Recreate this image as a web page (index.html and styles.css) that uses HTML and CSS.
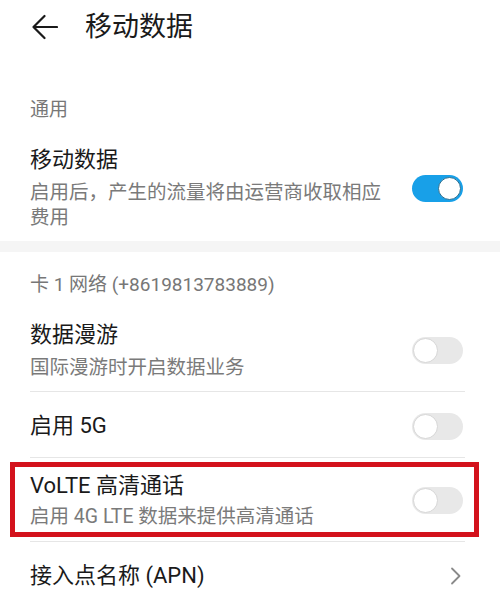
FILE: index.html
```html
<!DOCTYPE html>
<html lang="zh-CN">
<head>
<meta charset="utf-8">
<title>移动数据</title>
<link rel="stylesheet" href="styles.css">
</head>
<body>
<div class="page">
  <header class="header">
    <svg class="back" width="26" height="26" viewBox="0 0 26 26" aria-hidden="true">
      <path d="M1.5 13 H25 M12.5 2 L1.5 13 L12.5 24" fill="none" stroke="#1a1a1a" stroke-width="2.2" stroke-linecap="round" stroke-linejoin="round"/>
    </svg>
    <h1 class="title">移动数据</h1>
  </header>

  <div class="label label-first">通用</div>
  <div class="item item-1">
    <div class="text">
      <div class="item-title">移动数据</div>
      <div class="item-sub">启用后，产生的流量将由运营商收取相应费用</div>
    </div>
    <span class="toggle on"><span class="knob"></span></span>
  </div>

  <div class="band"></div>

  <div class="label label-second">卡 1 网络 (+8619813783889)</div>
  <div class="item item-2">
    <div class="text">
      <div class="item-title">数据漫游</div>
      <div class="item-sub">国际漫游时开启数据业务</div>
    </div>
    <span class="toggle"><span class="knob"></span></span>
  </div>
  <div class="divider"></div>
  <div class="item item-single">
    <div class="text">
      <div class="item-title">启用 5G</div>
    </div>
    <span class="toggle"><span class="knob"></span></span>
  </div>
  <div class="divider"></div>
  <div class="item item-volte">
    <div class="text">
      <div class="item-title">VoLTE 高清通话</div>
      <div class="item-sub">启用 4G LTE 数据来提供高清通话</div>
    </div>
    <span class="toggle"><span class="knob"></span></span>
    <div class="highlight"></div>
  </div>
  <div class="divider"></div>
  <div class="item item-apn">
    <div class="text">
      <div class="item-title">接入点名称 (APN)</div>
    </div>
    <svg class="chevron" width="12" height="18" viewBox="0 0 12 18" aria-hidden="true">
      <path d="M2 1.5 L9.5 9 L2 16.5" fill="none" stroke="#8a8a8a" stroke-width="1.8" stroke-linecap="round" stroke-linejoin="round"/>
    </svg>
  </div>
</div>
</body>
</html>
```

FILE: styles.css
```css
html, body {
  margin: 0;
  padding: 0;
  background: #ffffff;
}

body {
  font-family: "Roboto", "Noto Sans CJK SC", "Noto Sans", sans-serif;
  color: #1a1a1a;
}

.page {
  width: 500px;
  height: 596px;
  overflow: hidden;
}

.header {
  height: 54px;
  display: flex;
  align-items: center;
  padding-left: 32px;
}

.back {
  display: block;
  flex: none;
}

.title {
  margin: 0 0 0 27px;
  font-size: 27px;
  font-weight: 400;
  line-height: 34px;
  color: #1a1a1a;
}

.label {
  padding-left: 30px;
  font-size: 19px;
  line-height: 24px;
  color: #777777;
}

.label-first {
  margin-top: 44px;
}

.label-second {
  margin-top: 21px;
}

.item {
  position: relative;
  display: flex;
  align-items: center;
  padding: 0 37px 0 30px;
}

.text {
  flex: 1;
  min-width: 0;
}

.item-title {
  font-size: 22px;
  line-height: 28px;
  color: #1a1a1a;
}

.item-sub {
  margin-top: 6px;
  font-size: 19.5px;
  line-height: 25px;
  color: #7a7a7a;
}

.item-1 {
  padding-top: 24px;
  padding-bottom: 11px;
}

.item-1 .text {
  padding-right: 20px;
}

.item-2 {
  padding-top: 24px;
  padding-bottom: 11px;
}

.item-single {
  padding-top: 20px;
  padding-bottom: 17px;
}

.item-volte {
  padding-top: 14px;
  padding-bottom: 12px;
}

.item-volte .item-sub {
  margin-top: 4px;
}

.item-apn {
  padding-top: 20px;
  padding-bottom: 8px;
  padding-right: 38px;
}

.divider {
  height: 1px;
  margin: 0 35px 0 30px;
  background: #e6e6e6;
}

.band {
  height: 11px;
  background: #f5f5f5;
}

.toggle {
  position: relative;
  flex: none;
  width: 51px;
  height: 27px;
  border-radius: 14px;
  background: #e8e8e8;
  box-sizing: border-box;
}

.toggle .knob {
  position: absolute;
  top: 1px;
  left: 1px;
  width: 25px;
  height: 25px;
  border-radius: 50%;
  background: #ffffff;
  border: 1px solid #d6d6d6;
  box-sizing: border-box;
}

.toggle.on {
  background: #18a0e8;
}

.toggle.on .knob {
  left: auto;
  right: 2px;
  top: 2px;
  width: 23px;
  height: 23px;
  border: 1.5px solid #2f6f8f;
}

.highlight {
  position: absolute;
  left: 10px;
  top: 4px;
  width: 469px;
  height: 75px;
  border: 5px solid #d3121c;
  box-sizing: border-box;
  pointer-events: none;
}

.chevron {
  display: block;
  flex: none;
}
```
